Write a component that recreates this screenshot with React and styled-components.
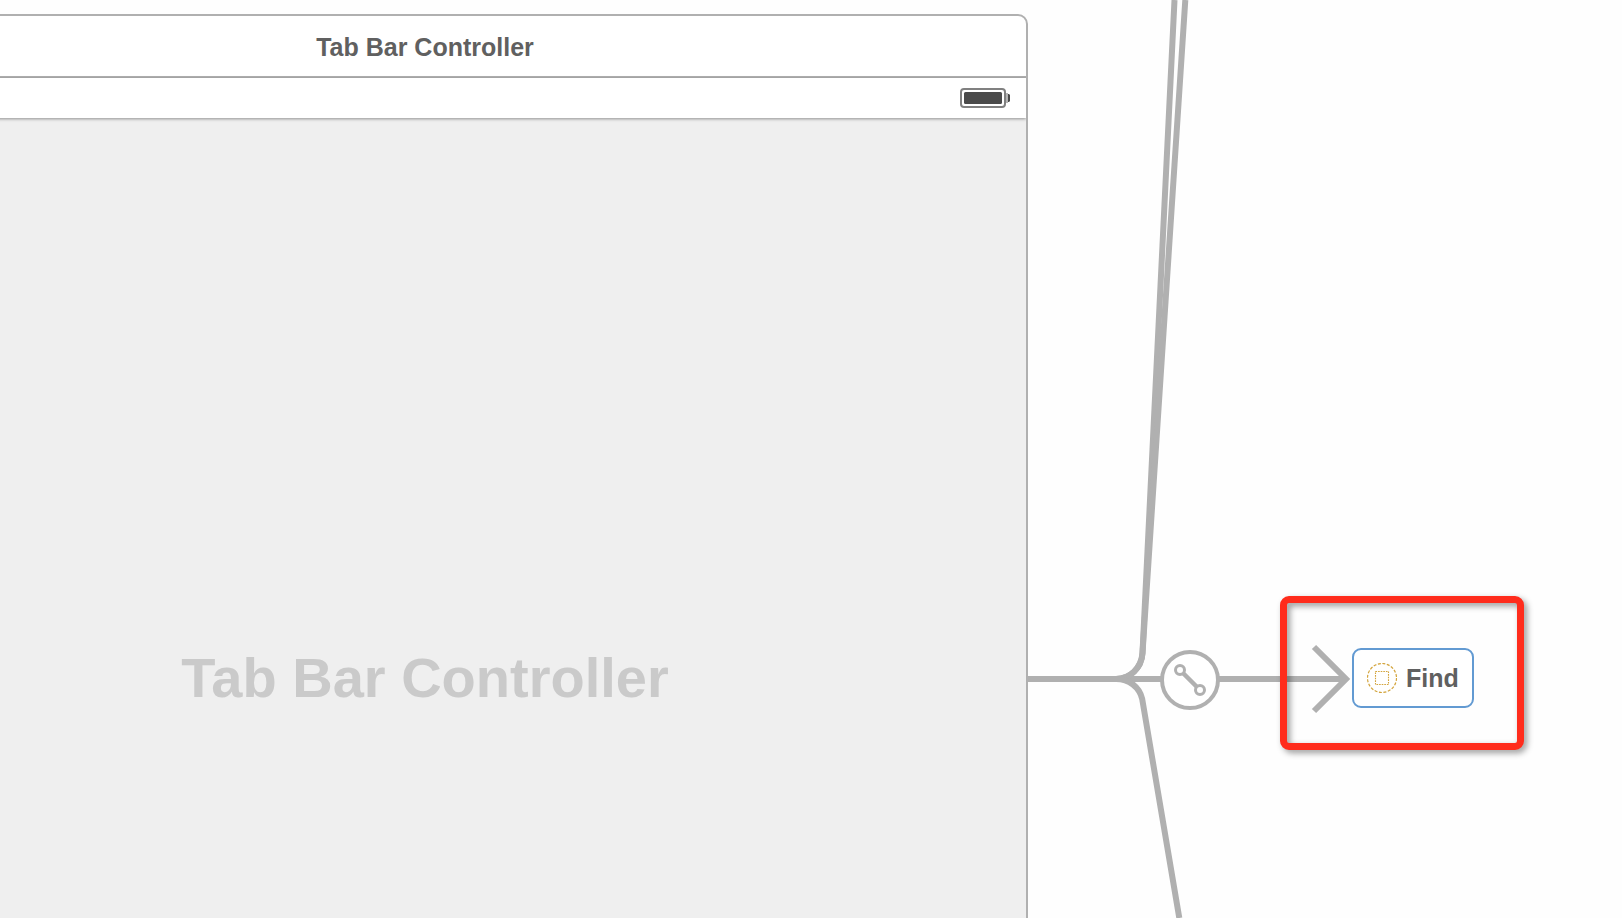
import React from 'react';
import styled, { createGlobalStyle } from 'styled-components';

const GlobalStyle = createGlobalStyle`
    * {
        box-sizing: border-box;
    }
    body {
        margin: 0;
        background: #fefefe;
        font-family: 'Liberation Sans', Arial, sans-serif;
    }
`;

const WIRE = '#b0b0b0';

const CanvasStyled = styled.main`
    display: flex;
    align-items: flex-start;
    height: 100vh;
    overflow: hidden;
`;

// the scene is scrolled partly out of the canvas on its left side
const SceneStyled = styled.section`
    flex: 1;
    margin: 14px 0 0 -178px;
    border: 2px solid ${WIRE};
    border-radius: 10px;
    background: #fff;
    overflow: hidden;
`;

const SceneHeader = styled.header`
    display: flex;
    align-items: center;
    justify-content: center;
    height: 62px;
    padding-top: 2px;
    border-bottom: 2px solid ${WIRE};
`;

const SceneTitle = styled.h1`
    margin: 0;
    font-size: 25px;
    line-height: 30px;
    color: #606060;
`;

const StatusBar = styled.div`
    position: relative;
    display: flex;
    align-items: center;
    justify-content: flex-end;
    height: 40px;
    padding-right: 16px;
    box-shadow: 0 1px 3px rgba(0, 0, 0, 0.4);
`;

const SceneBody = styled.div`
    display: flex;
    align-items: center;
    justify-content: center;
    height: 1120px;
    background: #efefef;
`;

const Placeholder = styled.p`
    margin: 0;
    font-size: 56px;
    line-height: 64px;
    font-weight: bold;
    color: #cacaca;
`;

const ConnectionArea = styled.section`
    position: relative;
    flex: 0 0 594px;
`;

const Wires = styled.svg`
    display: block;
    overflow: visible;
    fill: none;
    stroke: ${WIRE};
    stroke-width: 6;
`;

const NodeStyled = styled.button`
    position: absolute;
    display: flex;
    align-items: center;
    padding: 0;
    font-family: inherit;
    background: #fff;
`;

const SegueNode = styled(NodeStyled)`
    left: 132px;
    top: 650px;
    justify-content: center;
    width: 60px;
    height: 60px;
    border: 4px solid ${WIRE};
    border-radius: 50%;
`;

const ReferenceNode = styled(NodeStyled)`
    left: 324px;
    top: 648px;
    gap: 9px;
    height: 60px;
    padding: 0 13px;
    border: 2px solid #629ad2;
    border-radius: 9px;
    font-size: 25px;
    line-height: 30px;
    font-weight: bold;
    color: #606060;
`;

const Highlight = styled.div`
    position: absolute;
    left: 252px;
    top: 596px;
    width: 244px;
    height: 154px;
    border: 7px solid #ff2c1c;
    border-radius: 9px;
    filter: drop-shadow(3px 3px 3px rgba(0, 0, 0, 0.4));
    pointer-events: none;
`;

function BatteryIcon() {
    return (
        <svg width="50" height="20" viewBox="0 0 50 20" aria-hidden="true">
            <rect x="1" y="1" width="44" height="18" rx="3" fill="#fff" stroke="#808080" strokeWidth="2" />
            <rect x="4" y="4" width="38" height="12" rx="1.5" fill="#4a4a4a" />
            <rect x="46" y="5" width="2" height="10" fill="#b4b4b4" />
            <path d="M48 6h1l1 1v6l-1 1h-1z" fill="#4a4a4a" />
        </svg>
    );
}

function SegueIcon() {
    return (
        <svg width="32" height="32" viewBox="0 0 32 32" fill="none" stroke={WIRE} aria-hidden="true">
            <path d="M9 9l14 14" strokeWidth="4.5" />
            <circle cx="6" cy="6" r="4.5" strokeWidth="3" />
            <circle cx="26" cy="26" r="4.5" strokeWidth="3" />
        </svg>
    );
}

function ReferenceIcon() {
    return (
        <svg width="30" height="30" viewBox="0 0 30 30" fill="none" stroke="#d3a43c" aria-hidden="true">
            <circle cx="15" cy="15" r="14.5" strokeWidth="1.2" strokeDasharray="3 1.55" />
            <rect x="8.5" y="8.5" width="13" height="13" strokeWidth="1.1" strokeDasharray="1.6 1" />
        </svg>
    );
}

function Scene({ title }) {
    return (
        <SceneStyled>
            <SceneHeader>
                <SceneTitle>{title}</SceneTitle>
            </SceneHeader>
            <StatusBar>
                <BatteryIcon />
            </StatusBar>
            <SceneBody>
                <Placeholder>{title}</Placeholder>
            </SceneBody>
        </SceneStyled>
    );
}

function App() {
    return (
        <>
            <GlobalStyle />
            <CanvasStyled>
                <Scene title="Tab Bar Controller" />
                <ConnectionArea>
                    <Wires width="594" height="918" viewBox="0 0 594 918" aria-hidden="true">
                        <path d="M0 679H317" />
                        <path d="M286 647l32 32l-32 32" />
                        <path d="M88 679C102 679 113.5 668 114.5 653L146.5 0" />
                        <path d="M88 679C102 679 113.5 668 114.5 653L157.3 0" />
                        <path d="M88 679C101 679 111.5 687 114.2 699L151.3 918" />
                    </Wires>
                    <SegueNode type="button" aria-label="Relationship segue">
                        <SegueIcon />
                    </SegueNode>
                    <ReferenceNode type="button">
                        <ReferenceIcon />
                        Find
                    </ReferenceNode>
                    <Highlight />
                </ConnectionArea>
            </CanvasStyled>
        </>
    );
}

export default App;
